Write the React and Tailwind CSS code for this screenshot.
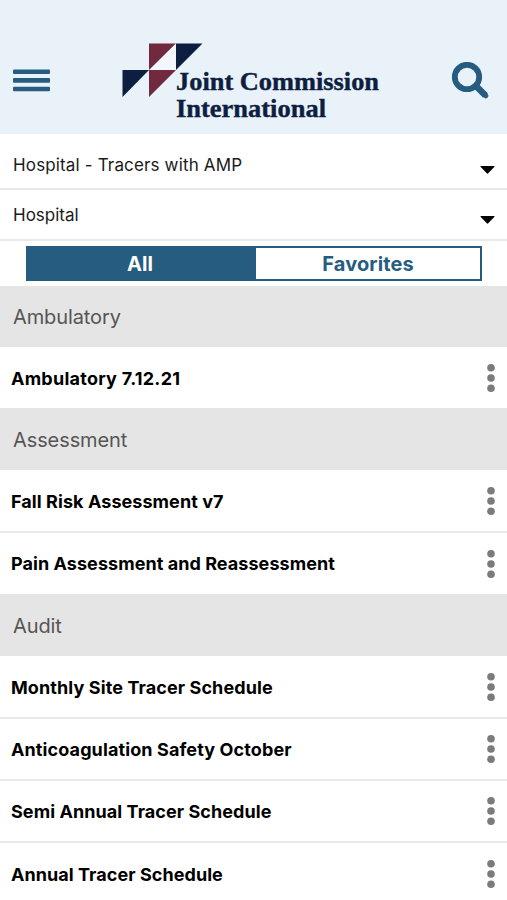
const sections = [
  { title: 'Ambulatory', height: 'h-[61px]', offset: 'pt-0', rows: [
    { name: 'Ambulatory 7.12.21', tracking: 'tracking-[0.25px]', height: 'h-[61px]', offset: 'pt-0.5' },
  ] },
  { title: 'Assessment', height: 'h-[62px]', offset: 'pt-0.5', rows: [
    { name: 'Fall Risk Assessment v7', tracking: 'tracking-[0.07px]', height: 'h-[63px]', offset: 'pt-0.5', line: true },
    { name: 'Pain Assessment and Reassessment', tracking: 'tracking-[0.06px]', height: 'h-[61px]', offset: 'pt-px' },
  ] },
  { title: 'Audit', height: 'h-[62px]', offset: 'pt-0.5', rows: [
    { name: 'Monthly Site Tracer Schedule', tracking: 'tracking-[0.1px]', height: 'h-[63px]', offset: 'pt-0.5', line: true },
    { name: 'Anticoagulation Safety October', tracking: 'tracking-[0.11px]', height: 'h-[62px]', offset: 'pt-px', line: true },
    { name: 'Semi Annual Tracer Schedule', tracking: 'tracking-[0.07px]', height: 'h-[62px]', offset: 'pt-px', line: true },
    { name: 'Annual Tracer Schedule', tracking: 'tracking-[0.06px]', height: 'h-[62px]', offset: 'pt-px' },
  ] },
];

function Logo() {
  return (
    <svg width="260" height="80" viewBox="121 42 260 80" aria-label="Joint Commission International">
      <path d="M149 43.5H176L149 70Z" fill="#70293f" />
      <path d="M149 70H176L149 97Z" fill="#70293f" />
      <path d="M176 43.5H202.500L176 70Z" fill="#0d1f41" />
      <path d="M122.500 70H149L122.500 97Z" fill="#0d1f41" />
      <path d="M149.500 70L175.500 44V70Z" fill="#f3f7fb" />
      <g fill="#0d1f41" stroke="#0d1f41" strokeWidth="0.400" fontFamily="'Liberation Serif', serif" fontWeight="700" fontSize="26">
        <text x="176" y="90" textLength="203" lengthAdjust="spacingAndGlyphs">Joint Commission</text>
        <text x="176" y="116.500" textLength="150" lengthAdjust="spacingAndGlyphs">International</text>
      </g>
    </svg>
  );
}

function Picker({ label, className }) {
  return (
    <button className={`flex w-full shrink-0 items-center justify-between border-b-2 border-[#e9e9e9] pl-[13px] pr-3 text-left text-[17px] text-[#1a1a1a] ${className}`}>
      <span className="pt-px">{label}</span>
      <svg className="mt-2.5" width="15" height="8" viewBox="0 0 15 8"><path d="M1 0H14Q15 0 14.300 .9L8.200 7.300Q7.500 8 6.800 7.300L.7 .9Q0 0 1 0Z" fill="#000" /></svg>
    </button>
  );
}

function Dots() {
  return (
    <svg width="8" height="30" viewBox="0 0 8 30" fill="#7b7b7b">
      <circle cx="4" cy="4.700" r="3.800" />
      <circle cx="4" cy="15" r="3.800" />
      <circle cx="4" cy="25.300" r="3.800" />
    </svg>
  );
}

export default function App() {
  return (
    <div className="flex h-[900px] w-[507px] flex-col overflow-hidden bg-white font-['Inter','Liberation_Sans',sans-serif]">
      <header className="flex h-[134px] shrink-0 items-start justify-between bg-[#e9f1f9] pl-[13px] pr-[18px]">
        <svg className="mt-[68px]" width="37" height="25" viewBox="0 0 37 25" fill="#255c80">
          <rect y="1.500" width="37" height="4.600" rx="1" />
          <rect y="10.100" width="37" height="4.600" rx="1" />
          <rect y="18.700" width="37" height="4.600" rx="1" />
        </svg>
        <div className="mt-[42px]"><Logo /></div>
        <svg className="mt-[62px]" width="38" height="38" viewBox="0 0 38 38" fill="none" stroke="#255c80">
          <circle cx="16" cy="15" r="12.200" strokeWidth="5.800" />
          <path d="M24.500 23.500L34.500 33.500" strokeWidth="6.500" />
          <path d="M33.500 32.500L34.800 33.800" strokeWidth="5" strokeLinecap="round" />
        </svg>
      </header>
      <Picker label="Hospital - Tracers with AMP" className="h-14 pt-2 tracking-[0.15px]" />
      <Picker label="Hospital" className="h-[51px] pt-px" />
      <div className="flex h-[45px] shrink-0 items-start pl-[26px] pr-[25px] pt-[5px]">
        <div className="flex h-[35px] w-full border-2 border-[#255c80] text-xl font-bold tracking-[0.1px]">
          <button className="flex w-[228px] items-center justify-center bg-[#255c80] pr-1 text-white">All</button>
          <button className="flex flex-1 items-center justify-center text-[#255c80]">Favorites</button>
        </div>
      </div>
      {sections.map((s) => (
        <section key={s.title} className="shrink-0">
          <h2 className={`flex items-center bg-[#e5e5e5] pl-[13px] text-xl tracking-[-0.1px] text-[#555] ${s.height} ${s.offset}`}>{s.title}</h2>
          {s.rows.map((r) => (
            <div key={r.name} className={`flex items-center justify-between pl-[11px] pr-3 ${r.height} ${r.line ? 'border-b-2 border-[#e8e8e8]' : ''}`}>
              <span className={`text-lg font-bold text-black ${r.tracking} ${r.offset}`}>{r.name}</span>
              <Dots />
            </div>
          ))}
        </section>
      ))}
    </div>
  );
}
